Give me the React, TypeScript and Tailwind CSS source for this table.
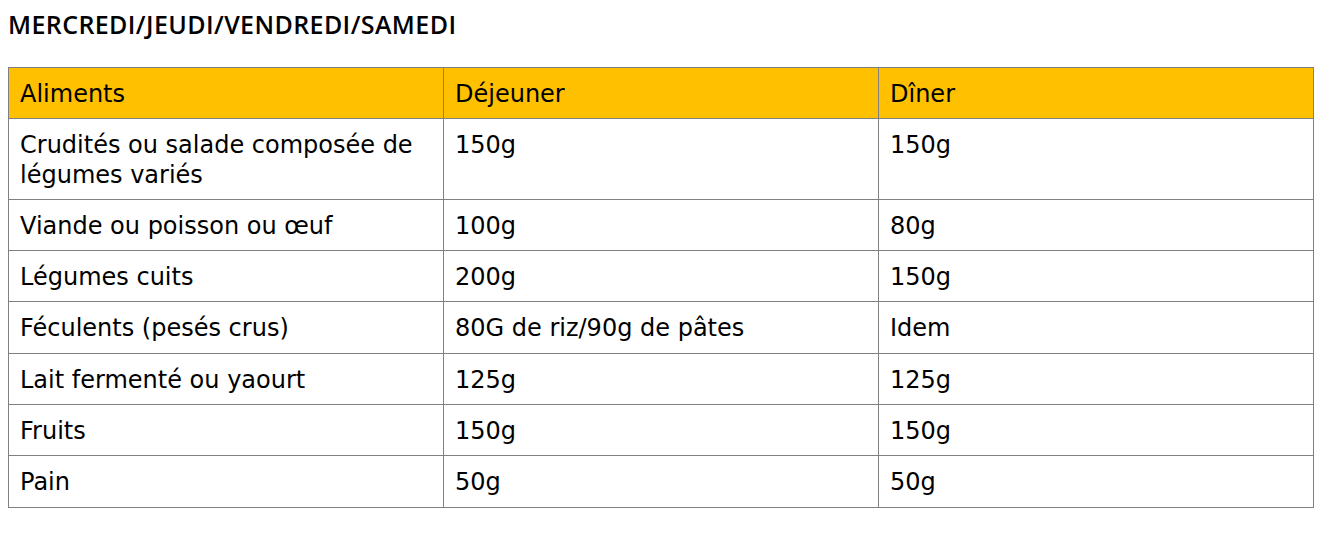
import React from "react";

const rows: [string, string, string][] = [
	["Crudités ou salade composée de légumes variés", "150g", "150g"],
	["Viande ou poisson ou œuf", "100g", "80g"],
	["Légumes cuits", "200g", "150g"],
	["Féculents (pesés crus)", "80G de riz/90g de pâtes", "Idem"],
	["Lait fermenté ou yaourt", "125g", "125g"],
	["Fruits", "150g", "150g"],
	["Pain", "50g", "50g"],
];

const App = () => {
	return (
		<div className="min-h-screen bg-white text-black font-['DejaVu_Sans',sans-serif]">
			<div className="px-2 pt-[10px]">
				<h1 className="text-[25px] leading-[29px] tracking-[0.4px] font-semibold font-['Open_Sans',sans-serif]">
					MERCREDI/JEUDI/VENDREDI/SAMEDI
				</h1>
				<table className="mt-[28px] w-[1306px] border-collapse text-[24px] leading-[29.3px] table-fixed">
					<thead>
						<tr className="bg-[#ffc000]">
							<th className="w-[435px] border border-[#808080] px-[11px] text-left font-normal align-top pt-[12px] pb-[9px]">
								Aliments
							</th>
							<th className="w-[435px] border border-[#808080] px-[11px] text-left font-normal align-top pt-[12px] pb-[9px]">
								Déjeuner
							</th>
							<th className="border border-[#808080] px-[11px] text-left font-normal align-top pt-[12px] pb-[9px]">
								Dîner
							</th>
						</tr>
					</thead>
					<tbody>
						{rows.map((row) => (
							<tr key={row[0]}>
								{row.map((cell, i) => (
									<td
										key={i}
										className="border border-[#808080] px-[11px] pt-[12px] pb-[9px] align-top"
									>
										{cell}
									</td>
								))}
							</tr>
						))}
					</tbody>
				</table>
			</div>
		</div>
	);
};

export default App;
